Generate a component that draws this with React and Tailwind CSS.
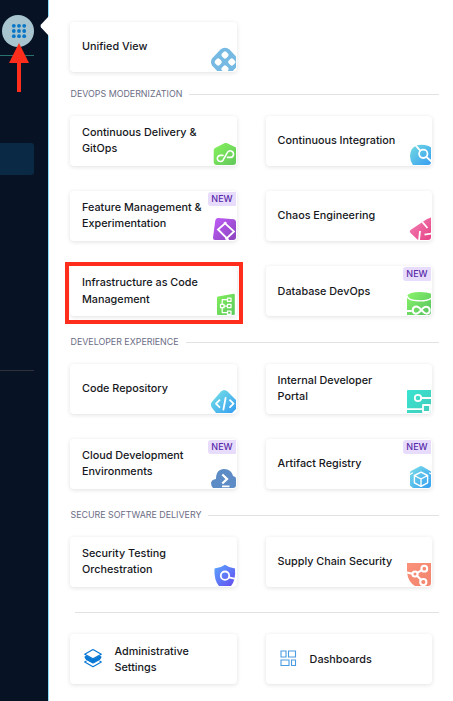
import React from "react";

const Grad = ({ id, from, to }) => (
  <linearGradient id={id} x1="0" y1="0" x2="1" y2="1">
    <stop offset="0" stopColor={from} />
    <stop offset="1" stopColor={to} />
  </linearGradient>
);

const line = { fill: "none", stroke: "#fff", strokeWidth: 1.8, strokeLinecap: "round", strokeLinejoin: "round" };

const icons = {
  unified: (
    <>
      <path d="M15 2.7Q17.500 2.700 19.500 4.500L28 13.500Q31 17 28 20.500L19 30H11L2 20.500Q0 17 2 13.500L10.500 4.500Q12.500 2.700 15 2.700Z" fill="#76b9e2" />
      {[[15, 10], [8.2, 17], [21.8, 17], [15, 24]].map(([x, y]) => (
        <rect key={x + "-" + y} x={x - 3.1} y={y - 3.1} width="6.200" height="6.200" rx="2" fill="#fff" transform={`rotate(45 ${x} ${y})`} />
      ))}
    </>
  ),
  cd: (
    <>
      <Grad id="cd" from="#86f35c" to="#62c75b" />
      <path d="M14.300 4.200Q15.700 3.500 17.200 4.200L26 8.500V26H6Q3.700 25.500 3.700 23V11Q3.800 9.500 5.500 8.700Z" fill="url(#cd)" />
      <path d="M13 16.400H10A3.100 3.100 0 1 0 13 21.200L17.200 13.800A3.300 3.300 0 1 1 20.500 18.400H17.500" {...line} strokeWidth="1.600" />
    </>
  ),
  feature: (
    <>
      <Grad id="ff" from="#c05cf8" to="#8b45bd" />
      <path d="M8.500 4L24 5.200Q26 5.700 26 8V26H5Q2.800 26 3 23.500L5.200 7Q5.700 3.800 8.500 4Z" fill="url(#ff)" />
      <path d="M16.300 8.300L8 15.500L18.500 26M14 8.300L24 17.500L15.500 25.500" {...line} strokeLinecap="butt" strokeLinejoin="miter" />
    </>
  ),
  ci: (
    <>
      <Grad id="ci" from="#72dbe0" to="#399df2" />
      <path d="M26 8.500V26H8Q5 22 5 17Q5.500 6 16.500 5.700Q22.500 5.700 26 8.500Z" fill="url(#ci)" />
      <circle cx="18.300" cy="14.800" r="4.200" {...line} />
      <path d="M11 6.800L15.300 11.600M21.300 17.800L26.500 22.500" {...line} />
    </>
  ),
  chaos: (
    <>
      <Grad id="ch" from="#f383b5" to="#e64286" />
      <path d="M26 3.500V26H13L5.300 18.700Q4 17 5.800 15.800L22 5Z" fill="url(#ch)" />
      <path d="M17.300 8L22.500 14M26.500 19.500L19.500 20.700M14 26.500L15 17" {...line} strokeLinecap="butt" />
    </>
  ),
  iac: (
    <>
      <Grad id="iac" from="#82ee5c" to="#5bc95c" />
      <path d="M7 8.700Q7 7.700 8 7.400L23.700 4.700Q24.800 4.700 24.800 5.700V26H8Q7 26 7 25Z" fill="url(#iac)" />
      <path d="M17.500 9H21V12.400H17.500ZM10.500 15.300H14V18.700H10.500ZM17.500 15.300H21V18.700H17.500ZM17.500 22H21V25.400H17.500ZM17.500 10.700H12.200V15.300M14 17H17.500M12.200 18.700V23.700H17.500" {...line} strokeWidth="1.250" />
    </>
  ),
  db: (
    <>
      <Grad id="db" from="#8af56a" to="#55c15d" />
      <path d="M2 7Q4 3 15 3Q22 3 26 4.700V26H2Z" fill="url(#db)" />
      <path d="M2.300 7.500C4 13 22 13 26.500 9" {...line} strokeWidth="1.400" />
      <path d="M2 22H6M16.500 21C14 18 12 17 10 17.700C7 18.700 7 23.700 10 24.500C15 26 16.500 17.200 21.500 17.700C25.800 18.200 25.800 24.500 21.500 24.700C19.500 24.700 18 22.800 16.500 21" {...line} strokeWidth="2" />
    </>
  ),
  code: (
    <>
      <Grad id="co" from="#79e4e5" to="#359df1" />
      <path d="M14 3Q16 3 17.500 4.500L26 13V22L22 26H6L1.800 20.500Q0 17.500 1.800 15L11 4.500Q12.500 3 14 3Z" fill="url(#co)" />
      <path d="M9.500 13.200L6 16.700L9.500 20.200M15.600 11L13.400 22.500M20 13.200L23.500 16.700L20 20.200" {...line} />
    </>
  ),
  cloud: (
    <>
      <path d="M3 26Q1 24 1 21Q1.500 17.500 6 17C6 10.500 9 7 14 7C19 7 22 10 23 14Q26 14.500 26 17V26Z" fill="#5c8bc5" />
      <path d="M12.300 12.500L17 17L12.300 21.500" {...line} strokeWidth="2.300" strokeLinecap="butt" strokeLinejoin="miter" />
      <path d="M12 24.300H19.500" {...line} strokeLinecap="butt" />
    </>
  ),
  idp: (
    <>
      <Grad id="idp" from="#38e4d1" to="#44cbbb" />
      <path d="M3 3H26V26H2V4Q2 3 3 3Z" fill="url(#idp)" />
      <circle cx="13" cy="11" r="3.200" {...line} />
      <path d="M16 11H27M2 22.200H17.500M18 18H25V25H18Z" {...line} strokeLinecap="butt" />
    </>
  ),
  artifact: (
    <>
      <Grad id="ar" from="#7bdfe6" to="#359df1" />
      <path d="M14.500 4.500Q16 3.700 17.500 4.500L26 9.500V26H8L5 23.500V11Q5 9.700 6 9Z" fill="url(#ar)" />
      <path d="M16 10.200L22.600 13.500V20.800L16 24.300L9.400 20.800V13.500ZM9.400 13.500L16 17L22.600 13.500M16 17V24.300" {...line} strokeWidth="1.400" />
      <path d="M5 12.500L7.500 11M24.500 11L27 12.500" {...line} strokeWidth="1.200" />
    </>
  ),
  sto: (
    <>
      <Grad id="sto" from="#58a6ff" to="#664bf0" />
      <path d="M15 4.700Q19.500 8 25 8.500Q26 20 21 26H9Q3.800 20 4.500 8.500Q10.500 8 15 4.700Z" fill="url(#sto)" />
      <circle cx="15" cy="15.700" r="4.200" {...line} />
      <path d="M19 17.300L24.300 18.700" {...line} />
    </>
  ),
  scs: (
    <>
      <Grad id="scs" from="#fa9179" to="#f2856f" />
      <path d="M2 3H26V26H10Q3 22 2 12Z" fill="url(#scs)" />
      <g {...line} strokeWidth="2">
        <circle cx="19.300" cy="8.700" r="2.900" />
        <circle cx="10" cy="14" r="2.600" />
        <circle cx="18.300" cy="22" r="3.100" />
        <path d="M2 12.500L7.400 13.700M12.400 12.800L16.700 10.200M12 15.800L16 19.800" />
      </g>
    </>
  ),
};

function Card({ title, icon, isNew, tall }) {
  return (
    <div className="relative flex h-[50px] items-center rounded bg-white pl-3 text-[10.8px] font-medium text-[#16171c] shadow-[0_1px_4px_rgba(40,41,61,0.14)]">
      <span className={"whitespace-pre " + (tall ? "leading-[17px]" : "leading-4")}>{title}</span>
      <svg className="absolute right-px bottom-px rounded-br-[3px]" width="26" height="26" viewBox="0 0 26 26">
        {icons[icon]}
      </svg>
      {isNew && (
        <span className="absolute top-px right-px h-3.5 w-7 rounded-[3px] rounded-r-[1px] bg-[#e8dcfc] text-center text-[9px] leading-3.5 font-medium text-[#592baa]">
          NEW
        </span>
      )}
    </div>
  );
}

function Section({ label, className, children }) {
  return (
    <section className={className}>
      <div className="flex h-4 items-center gap-[7px]">
        <h2 className="pl-[0.5px] text-[8.87px] leading-4 whitespace-nowrap text-[#6b6d85]">{label}</h2>
        <div className="mr-3.5 h-px flex-1 bg-[#e2e2e5]" />
      </div>
      <div className="mt-3.5 grid w-[362px] grid-cols-[167px_166.4px] gap-x-[28.6px] gap-y-[25px]">{children}</div>
    </section>
  );
}

function LinkCard({ title, children }) {
  return (
    <div className="flex h-[50px] items-center rounded bg-white pl-3 text-[10.8px] leading-4 font-medium text-[#16171c] shadow-[0_1px_4px_rgba(40,41,61,0.14)]">
      {children}
      <span className="ml-3 pt-px whitespace-pre">{title}</span>
    </div>
  );
}

export default function App() {
  return (
    <div className="flex h-[701px] w-[453px] overflow-hidden bg-white font-['Inter',sans-serif]">
      <aside className="relative w-[49px] shrink-0 border-r border-[#8bdcfa] bg-[#071325]">
        <div className="ml-0.5 pt-[15px]">
          <div className="grid size-8 place-items-center rounded-full bg-[#a7c4cf]">
            <svg className="ml-px" width="16" height="16" viewBox="0 0 16 16" fill="#0876c7">
              {[2.8, 8, 13.2].map((y) => [2.8, 8, 13.2].map((x) => <circle key={x + "," + y} cx={x} cy={y} r="1.900" />))}
            </svg>
          </div>
        </div>
        <div className="mt-2 h-px w-[34px] bg-[#28736f]" />
        <div className="mt-[87px] h-8 w-[34px] rounded-r-[3px] bg-[#092944]" />
        <div className="mt-[195px] h-px w-[34px] bg-[#30313b]" />
        <svg className="absolute top-4 right-[-1px]" width="9" height="20" viewBox="0 0 9 20">
          <path d="M9 0V20L1 11.500Q0 10 1 8.500Z" fill="#fff" />
        </svg>
        <svg className="absolute top-[43px] left-2" width="22" height="50" viewBox="0 0 22 50">
          <path d="M11 0L21 20H13V49H9V20H1Z" fill="#ff2d1c" />
        </svg>
      </aside>

      <main className="flex-1 pt-[21px] pl-[21px]">
        <div className="w-[167px] pt-[0.5px]">
          <Card title="Unified View" icon="unified" />
        </div>
        <Section label="DEVOPS MODERNIZATION" className="mt-[14.5px]">
          <Card title={"Continuous Delivery &\nGitOps"} icon="cd" />
          <Card title="Continuous Integration" icon="ci" />
          <Card title={"Feature Management &\nExperimentation"} icon="feature" isNew />
          <Card title="Chaos Engineering" icon="chaos" />
          <div className="relative">
            <Card title={"Infrastructure as Code\nManagement"} icon="iac" tall />
            <div className="absolute -top-1 -left-[5px] h-[62px] w-[178px] border-4 border-[#ff2d1c]" />
          </div>
          <Card title="Database DevOps" icon="db" isNew tall />
        </Section>
        <Section label="DEVELOPER EXPERIENCE" className="mt-[18px]">
          <Card title="Code Repository" icon="code" />
          <Card title={"Internal Developer\nPortal"} icon="idp" />
          <Card title={"Cloud Development\nEnvironments"} icon="cloud" isNew />
          <Card title="Artifact Registry" icon="artifact" isNew />
        </Section>
        <Section label="SECURE SOFTWARE DELIVERY" className="mt-[18px]">
          <Card title={"Security Testing\nOrchestration"} icon="sto" />
          <Card title="Supply Chain Security" icon="scs" />
        </Section>
        <div className="mt-[25px] mr-3.5 ml-[5px] h-px bg-[#e2e2e5]" />
        <div className="mt-[21px] grid w-[362px] grid-cols-[167px_166.4px] gap-x-[28.6px]">
          <LinkCard title={"Administrative\nSettings"}>
            <svg className="mb-0.5 ml-[0.5px]" width="20" height="20" viewBox="0 0 20 20" fill="none" stroke="#0878d4" strokeWidth="1.200" strokeLinejoin="round">
              <path d="M10 1.500L18.300 6.200L10 10.800L1.700 6.200Z" />
              <path d="M2 9L3.500 8.200L10 11.800L16.500 8.200L18 9L16.500 11.500L10 15L3.500 11.500Z" fill="#0878d4" />
              <path d="M3.500 13L1.700 14L10 18.700L18.300 14L16.500 13" />
            </svg>
          </LinkCard>
          <LinkCard title="Dashboards">
            <svg className="mb-0.5" width="20" height="20" viewBox="0 0 20 20" fill="none" stroke="#4a9ce0" strokeWidth="1.100">
              <path d="M3 3H8V9H3ZM10.500 3H17.500V9H10.500ZM3 12H11V17.500H3ZM13.500 12H17.500V17.500H13.500Z" />
            </svg>
          </LinkCard>
        </div>
      </main>
    </div>
  );
}
